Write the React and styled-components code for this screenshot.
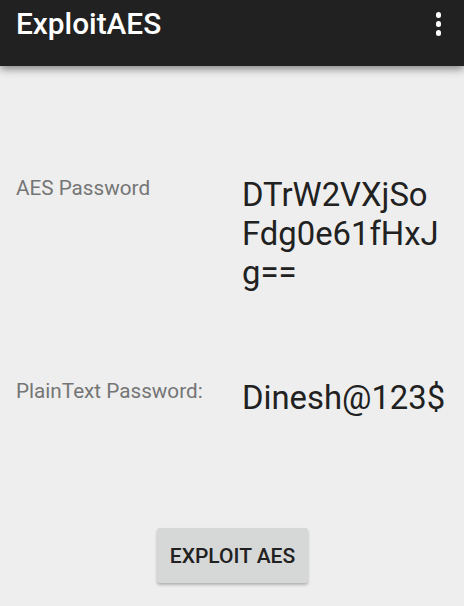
import React from "react";
import styled, { createGlobalStyle } from "styled-components";

const GlobalStyle = createGlobalStyle`
  html, body {
    margin: 0;
    padding: 0;
    background: #eeeeee;
    font-family: Roboto, "Noto Sans", sans-serif;
  }
`;

const Screen = styled.div`
  width: 464px;
  height: 606px;
  background: #eeeeee;
  display: flex;
  flex-direction: column;
  overflow: hidden;
`;

const AppBar = styled.header`
  height: 66px;
  background: #212121;
  display: flex;
  align-items: flex-start;
  justify-content: space-between;
  padding: 0 16px;
  box-shadow: 0 3px 8px rgba(0, 0, 0, 0.45);
  position: relative;
  z-index: 1;
`;

const Title = styled.h1`
  margin: 0;
  margin-top: 6px;
  color: #ffffff;
  font-size: 29.8px;
  font-weight: 500;
  line-height: 36px;
`;

const MenuButton = styled.div`
  display: flex;
  flex-direction: column;
  gap: 3.5px;
  padding-top: 12px;
  margin-right: 7px;
  align-items: center;
`;

const Dot = styled.span`
  width: 5.5px;
  height: 5.5px;
  border-radius: 50%;
  background: #ffffff;
`;

const Content = styled.main`
  flex: 1;
  display: flex;
  flex-direction: column;
  padding: 0 16px;
`;

const Row = styled.div`
  display: grid;
  grid-template-columns: 226px 200px;
  margin-top: ${(p) => p.$top}px;
`;

const Label = styled.div`
  color: #757575;
  font-size: 20.7px;
  line-height: 24px;
`;

const Value = styled.div`
  color: #212121;
  font-size: 32.8px;
  line-height: 39px;
  word-break: break-all;
  white-space: ${(p) => (p.$nowrap ? "nowrap" : "normal")};
`;

const ButtonRow = styled.div`
  display: flex;
  justify-content: center;
  margin-top: auto;
  margin-bottom: 23px;
`;

const Button = styled.button`
  width: 151px;
  height: 55px;
  border: none;
  border-radius: 3px;
  background: #d6d7d7;
  color: #212121;
  font-family: Roboto, sans-serif;
  font-size: 21px;
  font-weight: 500;
  box-shadow: 0 2px 3px rgba(0, 0, 0, 0.25);
  padding: 0;
  margin-left: 1px;
`;

export default function App() {
  return (
    <>
      <GlobalStyle />
      <Screen>
        <AppBar>
          <Title>ExploitAES</Title>
          <MenuButton>
            <Dot />
            <Dot />
            <Dot />
          </MenuButton>
        </AppBar>
        <Content>
          <Row $top={110}>
            <Label>AES Password</Label>
            <Value>DTrW2VXjSoFdg0e61fHxJg==</Value>
          </Row>
          <Row $top={86}>
            <Label>PlainText Password:</Label>
            <Value $nowrap>Dinesh@123$</Value>
          </Row>
          <ButtonRow>
            <Button>EXPLOIT AES</Button>
          </ButtonRow>
        </Content>
      </Screen>
    </>
  );
}
